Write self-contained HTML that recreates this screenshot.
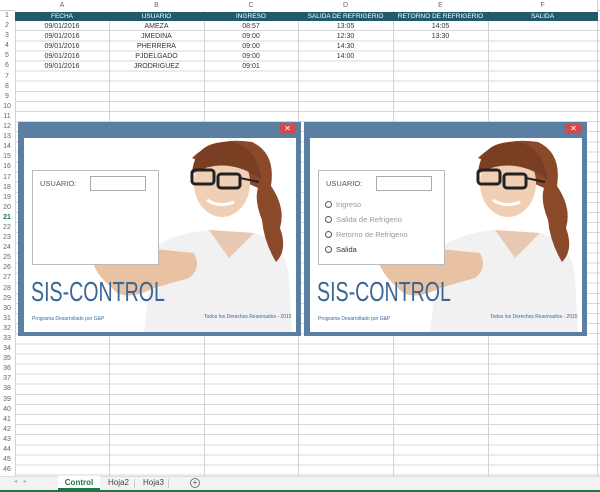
<!DOCTYPE html>
<html><head><meta charset="utf-8"><style>
*{margin:0;padding:0;box-sizing:border-box}
body{width:600px;height:492px;overflow:hidden;background:#fff;font-family:"Liberation Sans",sans-serif;position:relative}
.abs{position:absolute}
.grid{left:15px;top:11px;width:585px;height:465px;
background:
repeating-linear-gradient(to bottom,transparent 0,transparent 9.1px,#d8d8d8 9.1px,#d8d8d8 10.1px);}
.vl{position:absolute;top:0;width:1px;height:476px;background:#d4d4d4}
.rn{position:absolute;left:0;width:14px;font-size:7px;color:#666;text-align:center;line-height:10px}
.ch{position:absolute;top:0;height:11px;font-size:7px;color:#666;text-align:center;line-height:11px;background:#fff}
.cell{position:absolute;font-size:7px;color:#333;text-align:center;line-height:10px}
.hdr{position:absolute;left:15px;top:12px;width:583px;height:9px;background:#215a6b}
.hc{position:absolute;top:12px;font-size:6.5px;color:#fff;text-align:center;line-height:9px}
.dlg{position:absolute;top:122px;width:283px;height:214px;background:#5b7fa3}
.x{position:absolute;top:2px;right:5px;width:17px;height:10px;background:#d24a4a;color:#fff;font-size:8px;line-height:10px;text-align:center}
.cont{position:absolute;left:6px;top:16px;width:272px;height:194px;background:#fff;overflow:hidden}
.box{position:absolute;left:8px;top:32px;width:127px;height:95px;border:1px solid #bbb;background:#fff}
.lbl{position:absolute;left:7px;top:8px;font-size:7.5px;color:#555}
.inp{position:absolute;left:57px;top:5px;width:56px;height:15px;border:1px solid #aaa}
.title{position:absolute;left:7px;top:140px;font-size:28px;color:#3b6795;transform:scaleX(.70);transform-origin:left top;white-space:nowrap;line-height:28px}
.f1{position:absolute;left:8px;top:178px;font-size:5px;color:#3b6795;white-space:nowrap}
.f2{position:absolute;left:180px;top:176px;font-size:5px;color:#3b6795;white-space:nowrap}
.rad{position:absolute;left:6px;font-size:7.5px;color:#999;white-space:nowrap}
.rad i{display:inline-block;width:7px;height:7px;border:1.5px solid #555;border-radius:50%;margin-right:4px;vertical-align:-1px}
</style></head><body>
<div class="abs grid"></div>
<div class="vl" style="left:15px"></div>
<div class="vl" style="left:109px"></div>
<div class="vl" style="left:204px"></div>
<div class="vl" style="left:298px"></div>
<div class="vl" style="left:393px"></div>
<div class="vl" style="left:488px"></div>
<div class="vl" style="left:597px"></div>
<div class="abs" style="left:0;top:10px;width:600px;height:1px;background:#ccc"></div>
<div class="ch" style="left:15px;width:94px">A</div>
<div class="ch" style="left:109px;width:95px">B</div>
<div class="ch" style="left:204px;width:94px">C</div>
<div class="ch" style="left:298px;width:95px">D</div>
<div class="ch" style="left:393px;width:95px">E</div>
<div class="ch" style="left:488px;width:109px">F</div>
<div class="hdr"></div>
<div class="hc" style="left:15px;width:94px">FECHA</div>
<div class="hc" style="left:109px;width:95px">USUARIO</div>
<div class="hc" style="left:204px;width:94px">INGRESO</div>
<div class="hc" style="left:298px;width:95px">SALIDA DE REFRIGERIO</div>
<div class="hc" style="left:393px;width:95px">RETORNO DE REFRIGERIO</div>
<div class="hc" style="left:488px;width:109px">SALIDA</div>

<div class="cell" style="left:15px;width:94px;top:22px">09/01/2016<br>09/01/2016<br>09/01/2016<br>09/01/2016<br>09/01/2016</div>
<div class="cell" style="left:109px;width:95px;top:22px">AMEZA<br>JMEDINA<br>PHERRERA<br>PJDELGADO<br>JRODRIGUEZ</div>
<div class="cell" style="left:204px;width:94px;top:22px">08:57<br>09:00<br>09:00<br>09:00<br>09:01</div>
<div class="cell" style="left:298px;width:95px;top:22px">13:05<br>12:30<br>14:30<br>14:00</div>
<div class="cell" style="left:393px;width:95px;top:22px">14:05<br>13:30</div>

<div class="rn" style="top:11px;line-height:10.1px">1<br>2<br>3<br>4<br>5<br>6<br>7<br>8<br>9<br>10<br>11<br>12<br>13<br>14<br>15<br>16<br>17<br>18<br>19<br>20<br><b style="color:#217346">21</b><br>22<br>23<br>24<br>25<br>26<br>27<br>28<br>29<br>30<br>31<br>32<br>33<br>34<br>35<br>36<br>37<br>38<br>39<br>40<br>41<br>42<br>43<br>44<br>45<br>46</div>

<div class="dlg" style="left:18px">
 <div class="x">✕</div>
 <div class="cont">
  <svg class="abs" style="left:0;top:0" width="272" height="194" viewBox="0 0 272 194">
   <path d="M120 194 L130 110 Q150 95 185 92 L230 95 Q262 105 265 140 L268 194 Z" fill="#f1f1f1"/>
   <path d="M185 92 L205 120 L230 95 Z" fill="#e8c8b0"/>
   <path d="M68 120 Q100 108 140 112 L170 115 Q178 130 165 140 L130 150 Q100 165 88 150 Q70 135 68 120Z" fill="#e9c2a4"/>
   <path d="M168 20 Q190 -2 228 4 Q252 15 247 48 Q262 70 256 90 Q264 112 252 124 Q240 104 238 82 Q230 62 234 50 Z" fill="#8a4a2a"/>
   <ellipse cx="198" cy="45" rx="28" ry="34" fill="#f0cfb5"/>
   <path d="M168 36 Q170 3 205 4 Q232 6 238 42 Q215 25 190 28 Q178 30 168 36Z" fill="#7a3e22"/>
   <rect x="168" y="32" width="22" height="14" rx="3" fill="none" stroke="#222" stroke-width="3"/>
   <rect x="194" y="36" width="22" height="14" rx="3" fill="none" stroke="#222" stroke-width="3"/>
   <path d="M216 40 L235 44" stroke="#222" stroke-width="2"/>
   <path d="M183 62 Q195 70 210 64" stroke="#fff" stroke-width="3" fill="none"/>
  </svg>
  <div class="box"><div class="lbl">USUARIO:</div><div class="inp"></div></div>
  <div class="title">SIS-CONTROL</div>
  <div class="f1">Programa Desarrollado por G&amp;P</div>
  <div class="f2">Todos los Derechos Reservados - 2015</div>
 </div>
</div>

<div class="dlg" style="left:304px">
 <div class="x">✕</div>
 <div class="cont">
  <svg class="abs" style="left:0;top:0" width="272" height="194" viewBox="0 0 272 194">
   <path d="M120 194 L130 110 Q150 95 185 92 L230 95 Q262 105 265 140 L268 194 Z" fill="#f1f1f1"/>
   <path d="M185 92 L205 120 L230 95 Z" fill="#e8c8b0"/>
   <path d="M68 120 Q100 108 140 112 L170 115 Q178 130 165 140 L130 150 Q100 165 88 150 Q70 135 68 120Z" fill="#e9c2a4"/>
   <path d="M168 20 Q190 -2 228 4 Q252 15 247 48 Q262 70 256 90 Q264 112 252 124 Q240 104 238 82 Q230 62 234 50 Z" fill="#8a4a2a"/>
   <ellipse cx="198" cy="45" rx="28" ry="34" fill="#f0cfb5"/>
   <path d="M168 36 Q170 3 205 4 Q232 6 238 42 Q215 25 190 28 Q178 30 168 36Z" fill="#7a3e22"/>
   <rect x="168" y="32" width="22" height="14" rx="3" fill="none" stroke="#222" stroke-width="3"/>
   <rect x="194" y="36" width="22" height="14" rx="3" fill="none" stroke="#222" stroke-width="3"/>
   <path d="M216 40 L235 44" stroke="#222" stroke-width="2"/>
   <path d="M183 62 Q195 70 210 64" stroke="#fff" stroke-width="3" fill="none"/>
  </svg>
  <div class="box"><div class="lbl">USUARIO:</div><div class="inp"></div>
   <div class="rad" style="top:29px"><i></i>Ingreso</div>
   <div class="rad" style="top:44px"><i></i>Salida de Refrigerio</div>
   <div class="rad" style="top:59px"><i></i>Retorno de Refrigerio</div>
   <div class="rad" style="top:74px;color:#333"><i></i>Salida</div>
  </div>
  <div class="title">SIS-CONTROL</div>
  <div class="f1">Programa Desarrollado por G&amp;P</div>
  <div class="f2">Todos los Derechos Reservados - 2015</div>
 </div>
</div>

<div class="abs" style="left:0;top:476px;width:600px;height:14px;background:#f3f3f3;border-top:1px solid #ddd"></div>
<div class="abs" style="left:14px;top:478px;font-size:6px;color:#aaa">◂ &nbsp;&nbsp; ▸</div>
<div class="abs" style="left:58px;top:476px;width:42px;height:14px;background:#fff;border-bottom:2px solid #217346;font-size:8px;font-weight:bold;color:#217346;text-align:center;line-height:13px">Control</div>
<div class="abs" style="left:108px;top:476px;font-size:8px;color:#444;line-height:14px">Hoja2</div>
<div class="abs" style="left:134px;top:479px;width:1px;height:9px;background:#ccc"></div>
<div class="abs" style="left:143px;top:476px;font-size:8px;color:#444;line-height:14px">Hoja3</div>
<div class="abs" style="left:168px;top:479px;width:1px;height:9px;background:#ccc"></div>
<div class="abs" style="left:190px;top:478px;width:10px;height:10px;border:1px solid #777;border-radius:50%;font-size:8px;line-height:8px;text-align:center;color:#555">+</div>
<div class="abs" style="left:0;top:490px;width:600px;height:2px;background:#217346"></div>
</body></html>
